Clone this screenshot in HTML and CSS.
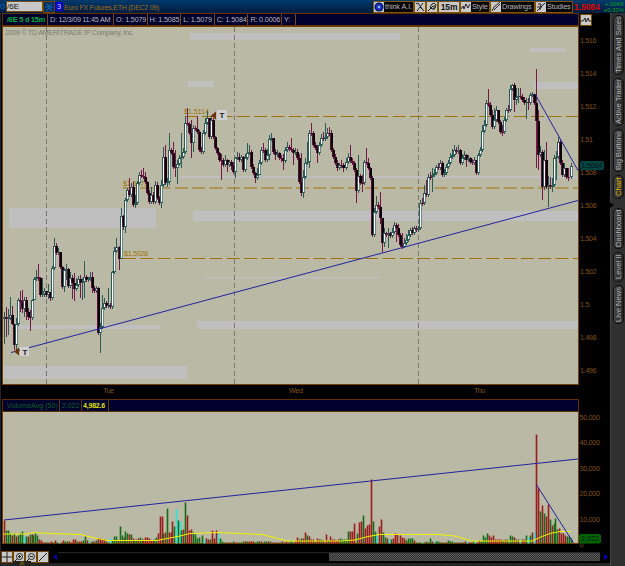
FILE: index.html
```
<!DOCTYPE html>
<html lang="en">
<head>
    <meta charset="UTF-8">
    <meta name="viewport" content="width=device-width, initial-scale=1.0">
    <title>/6E Chart</title>
    <link rel="stylesheet" href="styles.css">
</head>
<body>
    <div class="app">
        <div class="toolbar">
            <span class="dot"></span>
            <span class="symbol">/6E</span>
            <span class="picker"><svg width="10" height="10" viewBox="0 0 10 10"><path d="M1 5h8M2 1l3 3 3-3M2 9l3-3 3 3" /></svg></span>
            <span class="link-badge">3</span>
            <span class="instrument">Euro FX Futures,ETH (DEC2 09)</span>
            <div class="tools">
                <span class="tool think"><svg width="10" height="10" viewBox="0 0 10 10"><rect width="10" height="10" fill="#bcc4dc" /><circle cx="5" cy="5" r="4.5" fill="#081858" /><circle cx="5" cy="5" r="3" fill="#2038d8" /><circle cx="5" cy="5" r="1" fill="#b8f4ff" /></svg><span>think A.I.</span></span>
                <span class="tool icon-tool"><svg class="glyph" width="10" height="10" viewBox="0 0 10 10"><path d="M1 2l2-1 5 7M8 1L2 9M5 5l4 4" /></svg></span>
                <span class="tool icon-tool"><svg class="glyph" width="10" height="10" viewBox="0 0 10 10"><path d="M1 9l5-5M5 2l2-1 2 2-1 3-3 1-2-2zM7 3v5" /></svg></span>
                <span class="tool period">15m</span>
                <span class="tool style-tool"><svg class="glyph" width="10" height="10" viewBox="0 0 10 10"><path d="M0 7l2-3 1 3 2-5 2 4 2-4" /></svg><span>Style</span></span>
                <span class="tool drawings"><svg class="glyph" width="10" height="10" viewBox="0 0 10 10"><path d="M1 9l2-4 6-5M3 8l6-6" /></svg><span>Drawings</span></span>
                <span class="tool studies"><svg class="glyph" width="10" height="10" viewBox="0 0 10 10"><path d="M1 9l8-8M2 2h3l-1 6M1 5h5" /></svg><span>Studies</span></span>
            </div>
            <span class="last">1.5084</span>
            <span class="change"><span>+.0049</span><span>+0.33%</span></span>
        </div>
        <div class="main">
            <div class="workspace">
                <div class="info-bar">
                    <span class="info-cell series">/6E 5 d 15m</span>
                    <span class="info-cell date">D: 12/3/09 11:45 AM</span>
                    <span class="info-cell">O: 1.5079</span>
                    <span class="info-cell">H: 1.5085</span>
                    <span class="info-cell">L: 1.5079</span>
                    <span class="info-cell">C: 1.5084</span>
                    <span class="info-cell">R: 0.0006</span>
                    <span class="info-cell year">Y:</span>
                </div>
                <svg class="price-chart" id="price" width="608" height="373" viewBox="2 26 608 373">
                    <rect class="plot" x="2.5" y="26.5" width="576" height="358" />
                    <g class="bands">
                        <rect x="190" y="33" width="210" height="7" />
                        <rect x="188" y="81" width="26" height="6" />
                        <rect x="530" y="48" width="35" height="4" />
                        <rect x="534" y="82" width="44" height="7" />
                        <rect x="9" y="208" width="147" height="20" />
                        <rect x="193" y="211" width="385" height="10" />
                        <rect x="180" y="176" width="398" height="2" />
                        <rect x="16" y="325" width="145" height="4" />
                        <rect x="197" y="321" width="381" height="8" />
                        <rect x="3" y="366" width="184" height="13" />
                        <rect x="205" y="277" width="175" height="1.5" />
                    </g>
                    <text class="copyright" x="5" y="35" textLength="129">2009 © TD AMERITRADE IP Company, Inc.</text>
                    <path class="session" d="M46.5 27V384M234.5 27V384M418.5 27V384" />
                    <path class="level" d="M185 116.5H578M123 188H578M123 258.5H578" />
                    <g class="level-label">
                        <text x="184" y="114" textLength="25">$1.5114</text>
                        <text x="123" y="186" textLength="25">$1.5071</text>
                        <text x="124" y="256" textLength="24">$1.5028</text>
                    </g>
                    <g id="candles"></g>
                    <path class="trend" d="M11 352.5L578 200.5M535 94L578 170.5" />
                    <g class="marker">
                        <path d="M211 115.5l5-4v8zM14 351.5l5-4v8z" />
                        <rect x="217" y="110" width="10" height="10" />
                        <rect x="20" y="347" width="9" height="9" />
                        <text x="219.5" y="118">T</text>
                        <text x="22.5" y="354.6">T</text>
                    </g>
                    <g class="axis" id="price-axis"></g>
                    <rect x="580" y="161" width="24" height="9" rx="2" fill="#004444" />
                    <text class="price-tag" x="581.5" y="168" textLength="21">1.5084</text>
                    <g class="axis">
                        <text x="103" y="393" textLength="11">Tue</text>
                        <text x="289" y="393" textLength="14">Wed</text>
                        <text x="474" y="393" textLength="11">Thu</text>
                    </g>
                </svg>
                <div class="info-bar volume-bar">
                    <span class="info-cell study">VolumeAvg (50)</span>
                    <span class="info-cell volume">2,022</span>
                    <span class="info-cell average">4,982.6</span>
                </div>
                <svg class="volume-chart" width="608" height="138" viewBox="2 412 608 138">
                    <rect class="plot" x="2.5" y="411.5" width="576" height="132" />
                    <g id="volume"></g>
                    <path class="average-line" d="M3 534L28 534L33 532.5L50 533.5L80 534.5L95 538L107 540.5L157 540.5L180 536L190 533.5L218 532.5L262 534.5L272 537L287 541H340L355 540L368 536.5L380 534.5L437 534.5L455 536L472 541H532L542 536.5L550 533.5L560 531.5H571" />
                    <path class="trend" d="M4 520L578 459M536 484L573.5 543" />
                    <g class="axis" id="volume-axis"></g>
                    <rect x="579" y="534" width="22" height="9.5" rx="2" fill="#006400" />
                    <text class="volume-tag" x="581" y="541.3" textLength="18">2,022</text>
                </svg>
                <div class="bottom-bar">
                    <span class="mini"><svg class="glyph" width="10" height="10" viewBox="0 0 10 10"><path d="M5 0v10M0 5h10" /></svg></span>
                    <span class="mini"><svg class="glyph" width="10" height="10" viewBox="0 0 10 10"><circle cx="5.5" cy="4.5" r="3" /><path d="M1 9l2-2M4 4.5h3M5.5 3v3" /></svg></span>
                    <span class="mini"><svg class="glyph" width="10" height="10" viewBox="0 0 10 10"><circle cx="5.5" cy="4.5" r="3" /><path d="M1 9l2-2M4 4.5h3" /></svg></span>
                    <span class="mini"><svg class="glyph" width="10" height="10" viewBox="0 0 10 10"><path d="M1 9l8-8" /></svg></span>
                    <span class="arrow-left"></span>
                    <div class="scroll-track"><div class="scroll-thumb"></div></div>
                    <span class="arrow-right"></span>
                </div>
                <div class="footer"><span class="handle"><svg width="6" height="5" viewBox="0 0 6 5"><path d="M1 2.5l2-2 2 2M1 4.5l2-2 2 2" /></svg></span></div>
                <span class="chart-button"><svg class="glyph" width="10" height="10" viewBox="0 0 10 10"><path d="M0 6h2l2-3 1 4 2-4 1 3h2" /></svg></span>
            </div>
            <div class="side-tabs">
                <span class="tab times">Times And Sales</span>
                <span class="tab trader">Active Trader</span>
                <span class="tab buttons">Big Buttons</span>
                <span class="tab chart active">Chart</span>
                <span class="tab dashboard">Dashboard</span>
                <span class="tab level-two">Level II</span>
                <span class="tab news">Live News</span>
                <span class="pointer"></span>
            </div>
        </div>
    </div>
    <script src="chart.js"></script>
</body>
</html>
```
FILE: styles.css
```
body {
    margin: 0;
    width: 625px;
    height: 566px;
    overflow: hidden;
    background: #000;
    font-family: "Liberation Sans", Arial, sans-serif;
    font-size: 7.5px;
    color: #b8b8b8;
}

.app {
    display: flex;
    flex-direction: column;
    height: 566px;
}

.toolbar {
    display: flex;
    align-items: center;
    height: 13px;
    white-space: nowrap;
    background: linear-gradient(#003a6c, #001c3e);
}

.dot {
    flex: none;
    width: 5px;
    height: 5px;
    margin: 0 1px 0 0;
    border: 1px solid #0060b0;
    border-radius: 50%;
    box-sizing: border-box;
}

.symbol {
    width: 35px;
    height: 9px;
    line-height: 9px;
    border: 1px solid #765018;
    background: #c8c8c8;
    color: #111;
    font-size: 8px;
}

.picker {
    width: 10px;
    height: 10px;
    border: 1px solid #704600;
    background: #002d58;
}

.picker svg,
.tool svg,
.mini svg,
.chart-button svg {
    display: block;
}

.picker path {
    fill: none;
    stroke: #0073bd;
}

.link-badge {
    width: 8px;
    height: 9px;
    line-height: 9px;
    text-align: center;
    background: #0000d0;
    color: #ddd;
}

.instrument {
    width: 95px;
    margin-left: 1px;
    color: #a06a18;
    font-size: 7px;
    line-height: 13px;
    padding-top: 1px;
    letter-spacing: -0.25px;
}

.tools {
    display: flex;
    margin-left: auto;
}

.tool {
    display: flex;
    align-items: center;
    gap: 1px;
    height: 12px;
    box-sizing: border-box;
    border: 1px solid #805400;
    background: #050505;
    overflow: hidden;
    font-size: 7.3px;
    letter-spacing: -0.1px;
}

.think { width: 41px; }
.icon-tool { width: 12px; }
.style-tool { width: 30px; }
.drawings { width: 45px; }
.studies { width: 38px; }

.period {
    width: 22px;
    justify-content: center;
    background: #c8c8c8;
    color: #111;
    font-size: 8.5px;
    font-weight: bold;
}

.glyph {
    flex: none;
    background: #c9c9c9;
    fill: none;
    stroke: #222;
}

.last {
    width: 29px;
    margin-left: 1px;
    color: #e00000;
    font-size: 8.6px;
    font-weight: bold;
    letter-spacing: -0.1px;
}

.change {
    display: flex;
    flex-direction: column;
    width: 22px;
    color: #00a820;
    font-size: 6px;
    line-height: 6px;
    text-align: center;
}

.main {
    display: flex;
    flex: 1;
    min-height: 0;
}

.workspace {
    position: relative;
    width: 611px;
    padding-left: 1px;
    box-sizing: border-box;
    background: #000;
    border-right: 1px solid #444;
    border-left: 1px solid #222;
}

.info-bar {
    display: flex;
    width: 577px;
    height: 13px;
    box-sizing: border-box;
    border: 1px solid #603000;
    background: #00002d;
}

.info-cell {
    display: flex;
    flex: none;
    align-items: center;
    width: 33.6px;
    padding-left: 2px;
    box-sizing: border-box;
    border-right: 1px solid #7a4510;
    white-space: nowrap;
    font-size: 7.2px;
    letter-spacing: -0.15px;
}

.info-cell.series {
    width: 45px;
    padding-left: 4px;
    color: #00b43c;
    font-weight: bold;
}

.info-cell.date {
    width: 66px;
    letter-spacing: -0.25px;
}

.info-cell.year { width: 14px; }

.price-chart,
.volume-chart {
    display: block;
}

.plot {
    fill: #b9b9a5;
    stroke: #754000;
}

.bands { fill: #bfbfc0; }

.copyright {
    fill: #7c7d73;
    font-size: 7.2px;
}

.session {
    fill: none;
    stroke: #77776f;
    stroke-dasharray: 5 3;
}

.level {
    stroke: #a37207;
    stroke-dasharray: 13 4.3;
}

.level-label {
    fill: #a37207;
    font-size: 7.2px;
}

.trend {
    fill: none;
    stroke: #2323a0;
}

.marker path { fill: #713100; }
.marker rect { fill: #d0d0d0; }

.marker text {
    fill: #222;
    font-size: 8px;
    font-weight: bold;
}

.axis {
    fill: #805018;
    font-size: 7.3px;
}

.price-tag,
.volume-tag {
    fill: #001414;
    font-size: 7.3px;
}

.up { stroke: #2c5a55; }
.down { stroke: #74194a; }
.edge-up { fill: #2c5a55; }
.edge-down { fill: #581038; }
.body-up { fill: #fff; }
.body-down { fill: #080006; }
.vol-r { fill: #9c1c1c; }
.vol-g { fill: #146b18; }
.vol-c { fill: #22e8e0; }

.average-line {
    fill: none;
    stroke: #f2f200;
}

.volume-bar .info-cell { border-color: #68380c; }

.volume-bar .study {
    width: 57px;
    padding-left: 4px;
    color: #086024;
    letter-spacing: 0;
}

.volume-bar .volume {
    width: 22px;
    color: #086024;
}

.volume-bar .average {
    width: 27px;
    padding-left: 1px;
    color: #e0e000;
    font-weight: bold;
    font-size: 7px;
    letter-spacing: -0.2px;
}

.chart-button {
    position: absolute;
    top: 1px;
    left: 579px;
    border: 1px solid #704600;
}

.bottom-bar {
    display: flex;
    align-items: center;
    height: 13px;
}

.mini {
    flex: none;
    width: 10px;
    height: 10px;
    border: 1px solid #704600;
}

.mini:first-child { margin-left: -1px; }

.arrow-left,
.arrow-right {
    flex: none;
    width: 0;
    height: 0;
    border: 3px solid transparent;
}

.arrow-left {
    margin-left: 1px;
    border-right-color: #0000b4;
    border-right-width: 4px;
}

.arrow-right {
    margin-left: 4px;
    border-left-color: #0000b4;
    border-left-width: 4px;
}

.scroll-track {
    width: 542px;
    height: 9px;
    margin-left: 1px;
    border-top: 1px solid #252525;
}

.scroll-thumb {
    width: 271px;
    height: 8px;
    margin-left: 271px;
    background-color: #555;
    background-image: repeating-conic-gradient(#333 0 25%, #555 0 50%);
    background-size: 2px 2px;
}

.footer {
    display: flex;
    align-items: flex-end;
    height: 3px;
    margin-left: -1px;
    background: #252525;
}

.handle {
    width: 18px;
    height: 5px;
    margin-left: 12px;
    background: #222;
    text-align: center;
    line-height: 0;
}

.handle path {
    fill: none;
    stroke: #968000;
}

.side-tabs {
    position: relative;
    display: flex;
    flex-direction: column;
    align-items: center;
    gap: 3px;
    width: 14px;
    padding-top: 2px;
    box-sizing: border-box;
    background: #303030;
}

.tab {
    display: flex;
    align-items: center;
    justify-content: center;
    width: 11px;
    box-sizing: border-box;
    border: 1px solid #111;
    border-radius: 5px;
    background: linear-gradient(90deg, #252525, #454545);
    color: #b5b5b5;
    font-size: 7.6px;
    line-height: 9px;
    white-space: nowrap;
    writing-mode: vertical-rl;
    transform: rotate(180deg);
}

.tab.times { height: 60px; }
.tab.trader { height: 48px; }
.tab.buttons { height: 43px; }

.tab.chart {
    height: 24px;
    margin-bottom: 6px;
    color: #e0b800;
}

.tab.dashboard { height: 41px; }
.tab.level-two { height: 30px; }
.tab.news { height: 39px; }

.pointer {
    position: absolute;
    top: 189px;
    left: -1px;
    border: 3px solid transparent;
    border-left: 4px solid #000;
}
```
FILE: chart.js
```
const SVG = 'http://www.w3.org/2000/svg';
const STEP = 2;

// each entry is close[:high[:low]], the open is the previous close
const candles = `
317:312:344 319:307:337 318:309:335 315:297:320 324:306:325 345:324:350 324:318:351 300:298 302:291:312 309:290:313
300:297:317 312:297:320 317:308:320 318:310:331 300:299:320 279:277:300 277:270 278:264:281 295:277 294:278:297
291:288:297 295:291 292:284:299 298:292:301 268:266 246:238 253:243:255 252:248 267:252 287:266:289 270:268:292
269:264:280 286:268 278:272 283:275:299 289:273:301 285:278 279:276 283:275:298 282:278:300 277:261:298 280
279 277:272 288:272:293 291 288:286 333:287:335 327:323:353 308:295:329 303:298:310 306 305:288:308 307:303 272:271
251:247 247:238 259:246:270 216:208:259 227:215:230 200:198:233 190:188 195:178 187:183 205:182:207 203:195:208 183:181
175:172 176:170 177:168 182:172 193:181 202:190:204 195:187 202:192 185:181 198:182 203:196 185:180:208 157:147
183:145 182:178:187 150:133:185 153:148 167:142 168:150:177 164:160:184 158:155 157:133:168 152:148 123:116 124:108
133:122 143:120:158 128:125:152 129:126 132:116 150:130 152:147 133:130 123:118 118:111 137:121 120:116:139 137:118
148:136 153:147 160:152 160:154:180 165:158 160:155 165:159:172 162:160 166:160:170 172:162 158:157:178 157:152
160:153 157:155 170:156 158:154 153:143 152:145 167:150 173:164 178:172:183 175:168 163:160:175 150:147 150:143
160:148 155:149 139:135:160 138:133 152:138 155:149:160 153:150 158:152 158:155:162 161:154:170 150:147 147:142
149:145 150:138 153:148:165 152:148 158:149 182:154 193:153:196 177:170:198 163:158 162:142 133:130:168 133:123
145:131 148:142 153:145:163 145:142 138:134 139:132 137:123 133:128 133:127 150:130 157:148 163:154 168:160:171
165:163 165:160 168:163:172 162:158 157:153 161:145 163:158 170:161 191:168:203 176:155:193 183:174 183:175:192
162:160 163:148 168:158 178:167 235:176:237 212:208:237 205:196 207:202 218:192:224 243:218:252 233:228:247 235:232
233:228:248 236:232 232:228 225:222 228:223:242 235:224 245:233 247:233:249 243:238:248 240:234 235:230 230:228
233:227 228:226 230:226 228:226 203:200:230 203:198 193:185 195:180 177:174 177:172 175:168:192 173:169 167:165
168:163 163:160 175:161 173:169 167:164 163:160 157:153 155:149 150:145 152:147 150:145 163:149 158:154 155:151
160:154:167 158:155 162:157 163:159 160:157 173:160 155:153:175 150:147 131:125 125:120 103:100 105:89 115:102
127:110 120:108 110:106 122:110 132:120 132:125:136 120:117 110:108 110:105 89:85 85:84 100:83:112 97:88:105
96:88:103 97:88 100:94 103:97 102:98:119 103:98:110 95:93 94 103:94 121:69:168 155:110:170 152:146
187:150:200 160:150:190 187:142 185:176:207 187:177 185:178:192 158:155 157:151:180 142:137 163:140 175:160 168:163:177
177:168 177:168:181 166:163`.trim().split(/\s+/);

// bar colour followed by its height
const volume = `
r23 g13 g13 g10 r8 g10 r7 g8 g10 g12 c7 g7 r7 g9 r9 g8 g10 g8 r4 r3 r1 r1 g1 r1 r2 g1 r3 g1 c1 r1 r3 g2 g2 r2 r1 r4 r4 g2 r2 r2
g3 g7 r3 c2 r1 g2 r2 g3 r5 r5 r4 r4 g2 r1 c5 g3 g7 g7 r3 g17 g8 r6 g12 g10 r9 g9 r5 g3 g4 r5 g6 g4 r4 r6 r6 r5 r3 r3 g4 g6
r10 r27 r27 g10 r11 g35 r11 r11 r22 g17 c34 g23 c22 g13 r14 g41 r28 r13 r14 g11 g9 g5 g6 g8 c4 r5 r4 g4 r13 r5 r13 c10 g5 g2 g1 r1 g1 r1 g2 r1
r1 g1 g1 g2 r2 g2 r2 r2 r2 g1 g2 g2 r2 g2 g2 r2 g2 r1 r1 g1 r1 g1 r2 g1 r2 r1 g2 g2 r2 r6 r4 g5 r5 r11 g8 r7 r4 r4 g2 r5
r4 g4 r3 r9 g3 r7 r4 r4 r3 r4 g5 g4 g4 g4 g12 r12 r12 r20 g10 r21 r22 g28 r15 r18 r19 r64 g22 g12 c8 r17 r24 g11 g6 r5 c4 g4 r5 r10 r9 r8
r6 r5 g3 g5 g5 g5 r3 g1 g1 g1 c1 r1 g2 g1 g5 r2 c2 g2 g2 g1 r1 g1 r1 g3 g2 g2 g1 r1 g1 r1 g1 r2 c2 r1 r1 g2 c2 r1 r3 g2
g8 g6 g10 r8 r6 r8 r4 r4 r4 r4 g3 r4 g4 g8 g7 r6 g4 r4 c4 r4 r4 g8 c6 g8 r11 c11 r109 r55 g32 r38 g30 r27 r39 g24 r18 g20 g25 g14 r15 r10
r10 r8 g7 g7 g5`.trim().split(/\s+/);

// bars whose x position is fixed, the others are spread evenly between them
const anchors = [
    [0, 4],
    [volume.indexOf('g17'), 120],
    [volume.indexOf('g41'), 185],
    [volume.indexOf('r64'), 371],
    [volume.indexOf('r109'), 536],
    [volume.length - 1, 571]
];

function add(parent, name, attrs, text) {
    const el = document.createElementNS(SVG, name);
    for (const key in attrs) {
        el.setAttribute(key, attrs[key]);
    }
    if (text) {
        el.textContent = text;
    }
    parent.appendChild(el);
}

function drawCandles() {
    const group = document.getElementById('candles');
    const step = 566.5 / (candles.length - 1);
    let open = 319;
    candles.forEach((entry, i) => {
        const [close, high, low] = entry.split(':').map(Number);
        const x = Math.round(4 + i * step);
        const top = Math.min(open, close);
        const height = Math.max(1, Math.abs(close - open));
        const type = close < open ? 'up' : 'down';
        const wickTop = Math.min(top, high || top - STEP);
        const wickEnd = Math.max(top + height, low || top + height + STEP);
        add(group, 'path', { class: type, d: `M${x + 0.5} ${wickTop}V${wickEnd}` });
        add(group, 'rect', { class: 'edge-' + type, x: x - 1, y: top, width: 3, height: height });
        if (height > 2) {
            const inset = type === 'up' ? 1 : 0;
            add(group, 'rect', { class: 'body-' + type, x: x, y: top + inset, width: type === 'up' ? 1.3 : 2, height: height - 2 * inset });
        }
        open = close;
    });
}

function drawVolume() {
    const group = document.getElementById('volume');
    volume.forEach((bar, i) => {
        const height = Number(bar.slice(1));
        const n = Math.max(1, anchors.findIndex(([index]) => index >= i));
        const [i0, x0] = anchors[n - 1];
        const [i1, x1] = anchors[n];
        const x = Math.round(x0 + (i - i0) * (x1 - x0) / (i1 - i0));
        add(group, 'rect', { class: 'vol-' + bar[0], x: x - 0.3, y: 543.5 - height, width: 1.6, height: height });
    });
}

function drawAxes() {
    const price = document.getElementById('price-axis');
    ['1.516', '1.514', '1.512', '1.51', '1.508', '1.506', '1.504', '1.502', '1.5', '1.498', '1.496'].forEach((label, i) => {
        add(price, 'text', { x: 580, y: 43 + i * 33, textLength: label.length * 3.5 - 1 }, label);
    });
    const vol = document.getElementById('volume-axis');
    ['50,000', '40,000', '30,000', '20,000', '10,000', '0'].forEach((label, i) => {
        add(vol, 'text', { x: 579.5, y: 419.5 + i * 25.5, textLength: label.length > 1 ? 20.5 : 4 }, label);
    });
}

drawCandles();
drawVolume();
drawAxes();
```
